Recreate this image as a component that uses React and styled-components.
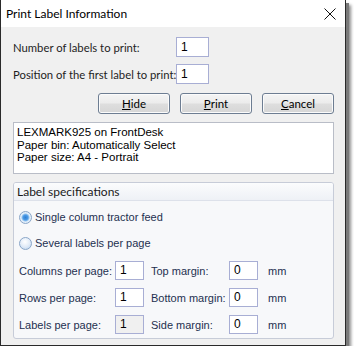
import React from 'react';
import styled, { createGlobalStyle } from 'styled-components';

const Global = createGlobalStyle`
  body {
    margin: 0;
    background: #ffffff;
    font-family: Lato, "Noto Sans", sans-serif;
  }
`

const Window = styled.div`
  width: 344px;
  height: 345px;
  border: 1px solid #2a2a2a;
  border-top: 0;
  background: #f0f0f0;
  display: flex;
  flex-direction: column;
  white-space: nowrap;
  box-shadow: 3px 3px 0 #7a7a7a, 5px 5px 3px rgba(0,0,0,0.45);
`

const TitleBar = styled.div`
  height: 27px;
  background: #ffffff;
  display: flex;
  align-items: center;
  justify-content: space-between;
  padding: 0 9px 0 5px;
  font-size: 12px;
  color: #000;
`

const Body = styled.div`
  flex: 1;
  padding: 10px 11px 0 12px;
  display: flex;
  flex-direction: column;
`

const FieldRow = styled.div`
  display: flex;
  align-items: center;
  height: 20px;
  margin-bottom: 7px;
  font-size: 11.3px;
  color: #1e1e1e;
`

const FieldLabel = styled.span`
  width: 163px;
`

const Input = styled.div`
  box-sizing: border-box;
  width: ${p => p.w || 33}px;
  height: ${p => p.h || 20}px;
  border: 1px solid #a8aed4;
  background: ${p => (p.disabled ? '#f0f0f0' : '#ffffff')};
  padding: 0 0 0 4px;
  font-family: "Liberation Sans", Arial, sans-serif;
  font-size: 12px;
  line-height: ${p => (p.h || 20) - 2}px;
  color: #000;
`

const ButtonRow = styled.div`
  display: flex;
  justify-content: flex-end;
  gap: 10px;
  margin-top: 2px;
`

const Button = styled.div`
  box-sizing: border-box;
  width: 72px;
  height: 21px;
  border: 1px solid #6d7d92;
  border-radius: 3px;
  background: linear-gradient(#f4f4f4 0%, #ececec 48%, #dedede 52%, #d6d6d6 100%);
  box-shadow: inset 0 0 0 1px #fbfbfb;
  display: flex;
  align-items: center;
  justify-content: center;
  font-size: 11.5px;
  color: #000;
  u { text-decoration: underline; }
`

const InfoBox = styled.div`
  box-sizing: border-box;
  height: 52px;
  margin-top: 8px;
  background: #ffffff;
  border: 1px solid #b9bdc7;
  padding: 3px 3px;
  font-family: "Liberation Sans", Arial, sans-serif;
  font-size: 11.5px;
  line-height: 12.5px;
  color: #000;
`

const Group = styled.div`
  box-sizing: border-box;
  height: 157px;
  margin-top: 8px;
  border: 1px solid #c7ccd8;
  border-radius: 3px;
  background: #f7f8fa;
  overflow: hidden;
  font-family: "Liberation Sans", Arial, sans-serif;
  font-size: 11px;
  color: #1e3050;
`

const GroupHeader = styled.div`
  height: 17px;
  border-bottom: 1px solid #dde1ea;
  background: linear-gradient(#fbfcfd, #eef1f6);
  padding-left: 3px;
  line-height: 17px;
  color: #1a1a1a;
  font-family: Lato, sans-serif;
  font-size: 12px;
`

const GroupBody = styled.div`
  padding: 8px 0 0 5px;
  display: flex;
  flex-direction: column;
`

const RadioRow = styled.div`
  display: flex;
  align-items: center;
  gap: 3px;
  height: 16px;
  margin-bottom: 10px;
  color: #1e3050;
`

const RadioDot = styled.span`
  box-sizing: border-box;
  width: 13px;
  height: 13px;
  border-radius: 50%;
  border: 1px solid #8aa6c8;
  background: ${p =>
    p.checked
      ? 'radial-gradient(circle, #2f7fd2 0, #4c9be6 2.5px, #9cc8f0 3.6px, #e6f0fa 4.5px, #d4e4f4 100%)'
      : 'radial-gradient(circle at 45% 35%, #ffffff 0, #e2ecf8 50%, #b8d2ee 100%)'};
`

const SpecGrid = styled.div`
  display: grid;
  grid-template-columns: 96px 29px 85px 29px 30px;
  grid-auto-rows: 19px;
  row-gap: 8px;
  align-items: center;
  color: #1e3050;
`

const Label2 = styled.span`
  padding-left: ${p => p.pl || 0}px;
`

const Unit = styled.span`
  padding-left: 10px;
`

const CloseIcon = () => (
  <svg width="12" height="12" viewBox="0 0 12 12">
    <path d="M0.5 0.5 L11.5 11.5 M11.5 0.5 L0.5 11.5" stroke="#111" strokeWidth="1" />
  </svg>
)

const rows = [
  { a: 'Columns per page:', av: '1', b: 'Top margin:', bv: '0' },
  { a: 'Rows per page:', av: '1', b: 'Bottom margin:', bv: '0' },
  { a: 'Labels per page:', av: '1', b: 'Side margin:', bv: '0', dis: true },
]

export default function App() {
  return (
    <>
      <Global />
      <Window>
        <TitleBar>
          <span>Print Label Information</span>
          <CloseIcon />
        </TitleBar>
        <Body>
          <FieldRow>
            <FieldLabel>Number of labels to print:</FieldLabel>
            <Input>1</Input>
          </FieldRow>
          <FieldRow>
            <FieldLabel>Position of the first label to print:</FieldLabel>
            <Input>1</Input>
          </FieldRow>
          <ButtonRow>
            <Button><u>H</u>ide</Button>
            <Button><u>P</u>rint</Button>
            <Button><u>C</u>ancel</Button>
          </ButtonRow>
          <InfoBox>
            LEXMARK925 on FrontDesk<br />
            Paper bin: Automatically Select<br />
            Paper size: A4 - Portrait
          </InfoBox>
          <Group>
            <GroupHeader>Label specifications</GroupHeader>
            <GroupBody>
              <RadioRow><RadioDot checked /> Single column tractor feed</RadioRow>
              <RadioRow><RadioDot /> Several labels per page</RadioRow>
              <SpecGrid>
                {rows.map(r => (
                  <React.Fragment key={r.a}>
                    <Label2>{r.a}</Label2>
                    <Input w={29} h={19} disabled={r.dis}>{r.av}</Input>
                    <Label2 pl={7}>{r.b}</Label2>
                    <Input w={29} h={19}>{r.bv}</Input>
                    <Unit>mm</Unit>
                  </React.Fragment>
                ))}
              </SpecGrid>
            </GroupBody>
          </Group>
        </Body>
      </Window>
    </>
  );
}
